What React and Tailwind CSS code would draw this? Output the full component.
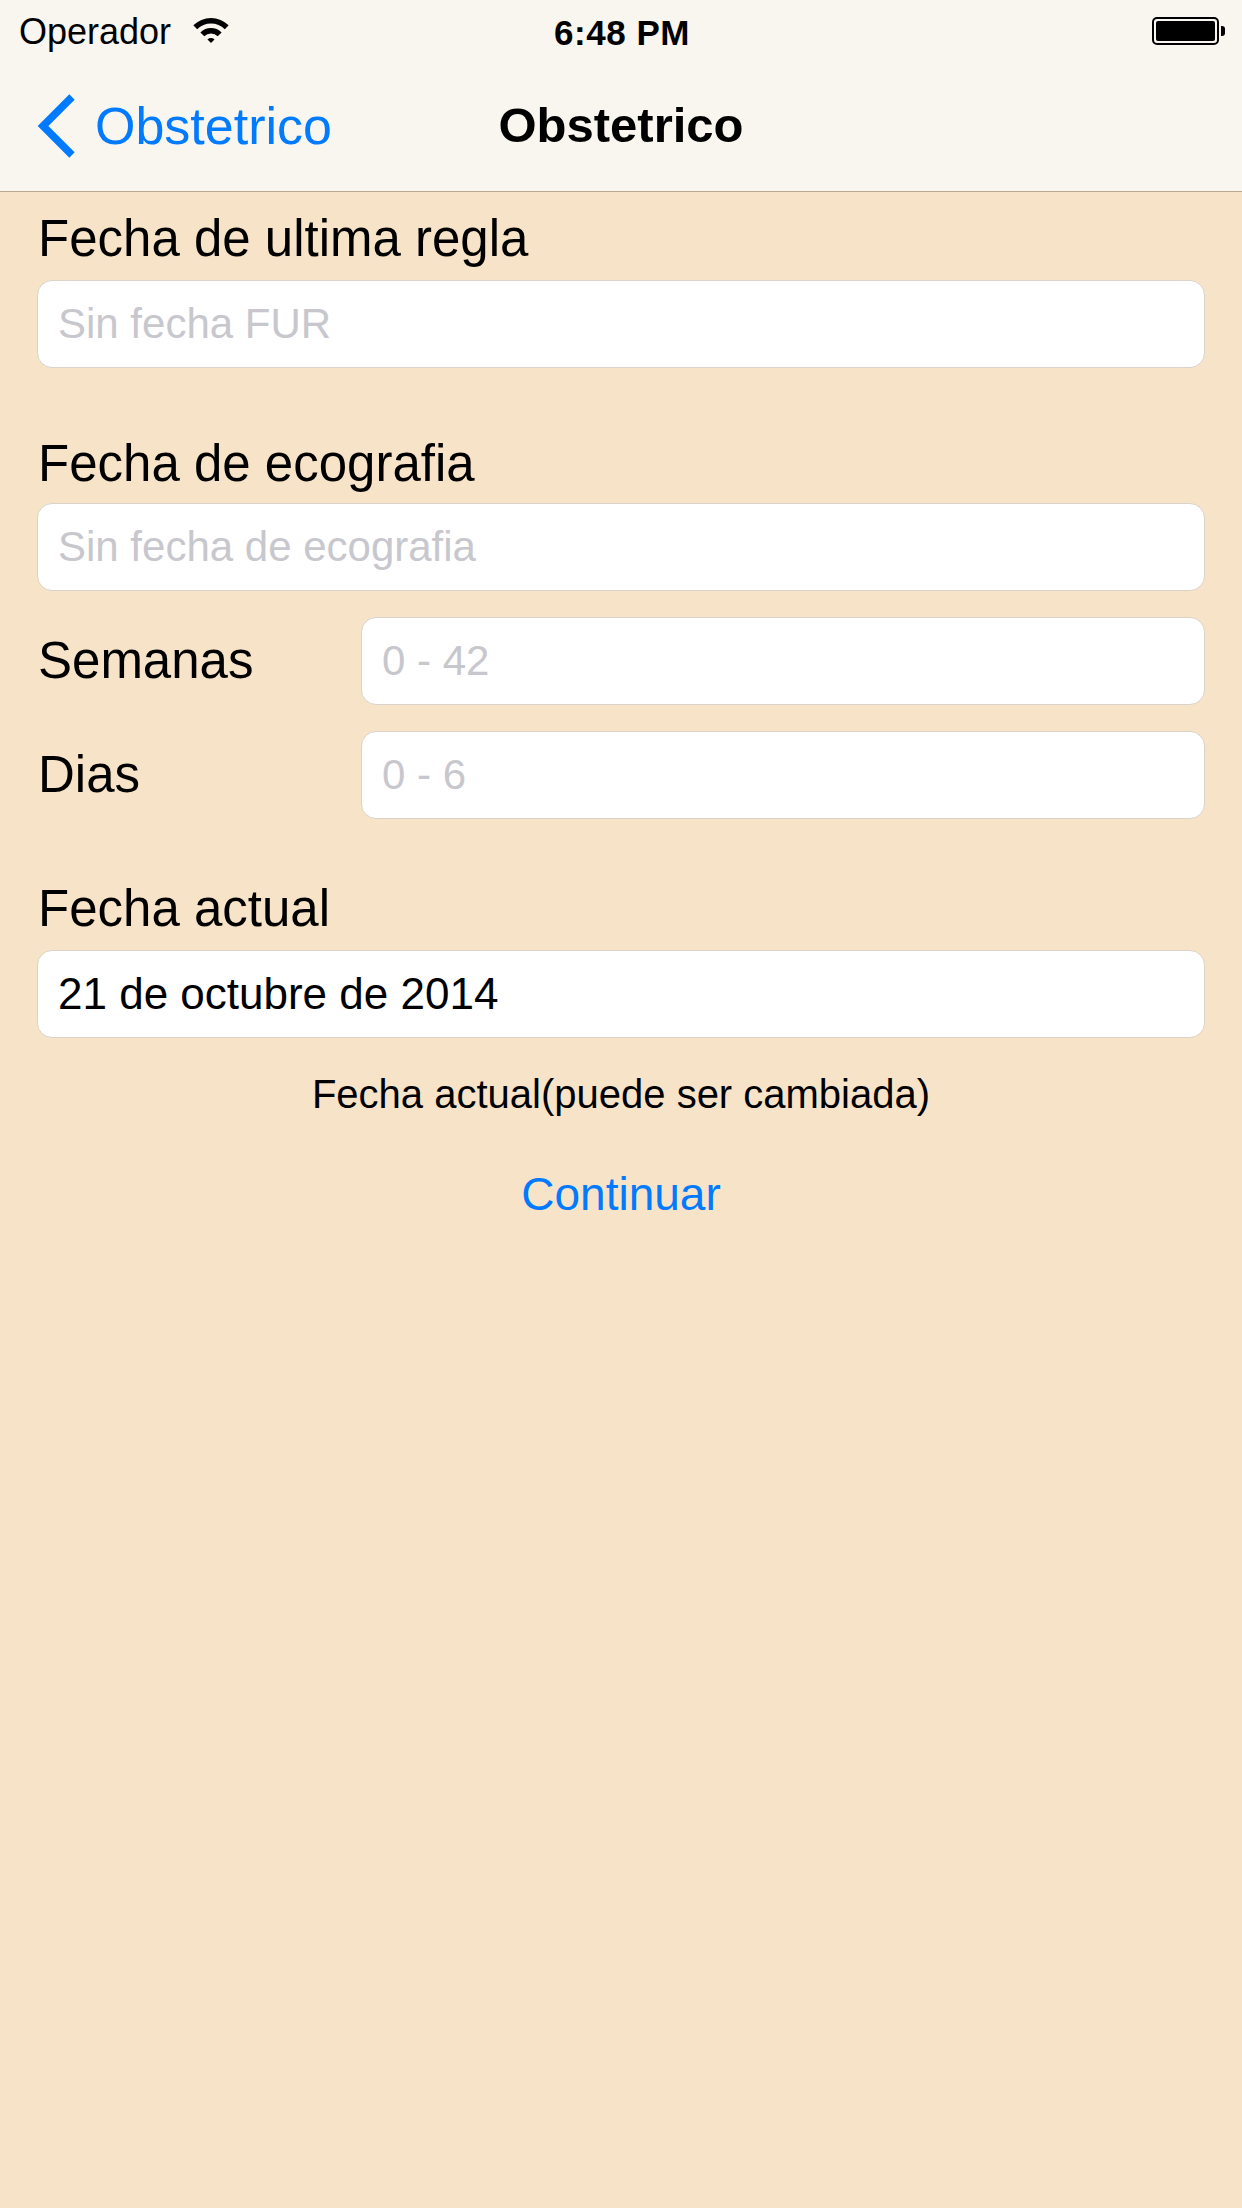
import React from "react";

const FONT = { fontFamily: '"Liberation Sans", Arial, Helvetica, sans-serif' };

function Wifi() {
  return (
    <svg width="36" height="26" viewBox="0 0 36 26" className="block">
      <path d="M0.32 8.32 A25 25 0 0 1 35.68 8.32 L31.79 12.21 A19.5 19.5 0 0 0 4.21 12.21 Z" fill="#000" />
      <path d="M7.39 15.39 A15 15 0 0 1 28.61 15.39 L24.72 19.28 A9.5 9.5 0 0 0 11.28 19.28 Z" fill="#000" />
      <path d="M14.46 22.46 A5 5 0 0 1 21.54 22.46 L18 26 Z" fill="#000" />
    </svg>
  );
}

function Battery() {
  return (
    <div className="flex items-center">
      <div className="w-[67px] h-[28px] rounded-[5px] border-2 border-black p-[2px]">
        <div className="w-full h-full bg-black rounded-[2px]" />
      </div>
      <div className="ml-[2px] w-[4px] h-[10px] bg-black rounded-r-[3px]" />
    </div>
  );
}

function Field({ text, placeholder }) {
  return (
    <div className="h-[88px] bg-white rounded-[15px] border border-[#d9d3ca] flex items-center pl-[20px]">
      {placeholder ? (
        <span className="text-[42px] leading-none text-[#c7c7cd]">{placeholder}</span>
      ) : (
        <span className="text-[44px] leading-none text-black">{text}</span>
      )}
    </div>
  );
}

export default function App() {
  return (
    <div className="min-h-[2208px] w-[1242px] bg-[#f7e4c8] text-black" style={FONT}>
      {/* status + nav */}
      <div className="bg-[#f9f6f0]">
        <div className="h-[60px] pt-[4px] grid grid-cols-[1fr_auto_1fr] items-center px-[19px] pr-[17px]">
          <div className="flex items-center gap-[22px]">
            <span className="text-[36px] leading-none">Operador</span>
            <div className="-mt-[4px]">
              <Wifi />
            </div>
          </div>
          <span className="text-[35px] leading-none font-bold tracking-[0.5px]">6:48 PM</span>
          <div className="flex justify-end -mt-[2px]">
            <Battery />
          </div>
        </div>
        <div className="h-[132px] border-b border-[#b9a88d] grid grid-cols-[1fr_auto_1fr] items-center">
          <div className="flex items-center pl-[37px]">
            <svg width="40" height="64" viewBox="0 0 40 64" className="block">
              <path d="M35 3 L6 32 L35 61" fill="none" stroke="#007aff" strokeWidth="7.5" strokeLinecap="butt" strokeLinejoin="miter" />
            </svg>
            <span className="ml-[18px] text-[52px] leading-none text-[#007aff]">Obstetrico</span>
          </div>
          <span className="text-[49px] leading-none font-bold">Obstetrico</span>
          <div />
        </div>
      </div>

      {/* content */}
      <div className="px-[37px]">
        <div className="mt-[17px] h-[60px] leading-[60px] text-[51px] pl-[1px]">Fecha de ultima regla</div>
        <div className="mt-[11px]">
          <Field placeholder="Sin fecha FUR" />
        </div>

        <div className="mt-[66px] h-[60px] leading-[60px] text-[51px] pl-[1px]">Fecha de ecografia</div>
        <div className="mt-[9px]">
          <Field placeholder="Sin fecha de ecografia" />
        </div>

        <div className="mt-[26px] grid grid-cols-[324px_1fr] items-center">
          <div className="text-[51px] leading-[60px] pl-[1px]">Semanas</div>
          <Field placeholder="0 - 42" />
        </div>
        <div className="mt-[26px] grid grid-cols-[324px_1fr] items-center">
          <div className="text-[51px] leading-[60px] pl-[1px]">Dias</div>
          <Field placeholder="0 - 6" />
        </div>

        <div className="mt-[60px] h-[60px] leading-[60px] text-[51px] pl-[1px]">Fecha actual</div>
        <div className="mt-[11px]">
          <Field text="21 de octubre de 2014" />
        </div>

        <div className="mt-[31px] h-[50px] leading-[50px] text-[40px] text-center">
          Fecha actual(puede ser cambiada)
        </div>
        <div className="mt-[45px] h-[60px] leading-[60px] text-[46px] text-center text-[#007aff]">
          Continuar
        </div>
      </div>
    </div>
  );
}
